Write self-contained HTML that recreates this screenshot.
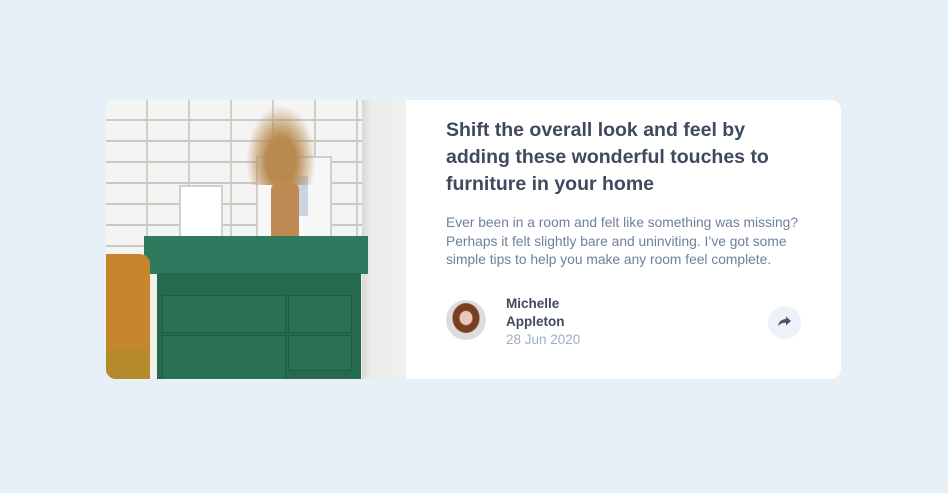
<!DOCTYPE html>
<html><head><style>
body{margin:0;width:948px;height:493px;background:#e7eff7;font-family:"Liberation Sans",sans-serif;position:relative;overflow:hidden}
.card{position:absolute;left:106px;top:100px;width:735px;height:279px;background:#fff;border-radius:10px;overflow:hidden}
.img{position:absolute;left:0;top:0;width:300px;height:279px;overflow:hidden;background:#f1f0ee}
.a{position:absolute}
h1{position:absolute;left:340px;top:17px;width:350px;margin:0;font-size:19.5px;line-height:27px;color:#3f4a5e;font-weight:bold}
p{position:absolute;left:340px;top:114px;width:362px;margin:0;font-size:13.8px;line-height:18.5px;color:#6e8098}
.av{position:absolute;left:340px;top:200px;width:40px;height:40px;border-radius:50%;background:radial-gradient(ellipse at 50% 45%,#e9c9b5 0 6px,#7a3f22 7px 13px,#ddd 14px)}
.nm{position:absolute;left:400px;top:195px;font-size:13.5px;line-height:18px;font-weight:bold;color:#3f4a5e}
.dt{position:absolute;left:400px;top:232px;font-size:13.5px;color:#9eafc2}
.sh{position:absolute;left:662px;top:206px;width:33px;height:33px;border-radius:50%;background:#ecf2f8}
.br{background:repeating-linear-gradient(180deg,transparent 0 19px,#c9c9c6 19px 21px),repeating-linear-gradient(90deg,#f4f4f3 0 40px,#cfcfcc 40px 42px)}
</style></head><body>
<div class="card">
<div class="img">
<div class="a br" style="left:0;top:0;width:258px;height:160px"></div>
<div class="a" style="left:256px;top:0;width:44px;height:279px;background:linear-gradient(90deg,#d8d8d6,#ebebea 20%,#f0f0ef)"></div>
<div class="a" style="left:73px;top:85px;width:40px;height:58px;background:#fff;border:2px solid #cfd0d2"></div>
<div class="a" style="left:150px;top:56px;width:72px;height:82px;background:#f7f7f7;border:2px solid #cfd0d2"></div>
<div class="a" style="left:172px;top:76px;width:30px;height:40px;background:#c9d3e1"></div>
<div class="a" style="left:140px;top:5px;width:70px;height:80px;background:radial-gradient(ellipse at 50% 70%,#b88a4e 0 30%,rgba(184,138,78,.4) 55%,transparent 70%)"></div>
<div class="a" style="left:165px;top:82px;width:28px;height:75px;background:#c08a55;border-radius:8px 8px 6px 6px"></div>
<div class="a" style="left:38px;top:136px;width:224px;height:38px;background:#2d7a5e"></div>
<div class="a" style="left:51px;top:173px;width:204px;height:106px;background:#25694f"></div>
<div class="a" style="left:56px;top:195px;width:122px;height:36px;background:#2a7055;border:1px solid #1f5b44"></div>
<div class="a" style="left:182px;top:195px;width:62px;height:36px;background:#2a7055;border:1px solid #1f5b44"></div>
<div class="a" style="left:56px;top:235px;width:122px;height:44px;background:#2a7055;border:1px solid #1f5b44"></div>
<div class="a" style="left:182px;top:235px;width:62px;height:34px;background:#2a7055;border:1px solid #1f5b44"></div>
<div class="a" style="left:0;top:154px;width:44px;height:125px;background:#c5862e;border-radius:0 10px 0 0"></div>
<div class="a" style="left:0;top:250px;width:44px;height:29px;background:#b58a2a"></div>
</div>
<h1>Shift the overall look and feel by adding these wonderful touches to furniture in your home</h1>
<p>Ever been in a room and felt like something was missing? Perhaps it felt slightly bare and uninviting. I’ve got some simple tips to help you make any room feel complete.</p>
<div class="av"></div>
<div class="nm">Michelle<br>Appleton</div>
<div class="dt">28 Jun 2020</div>
<div class="sh"><svg width="33" height="33" viewBox="0 0 33 33"><path d="M18 10.5l5 4.5-5 4.5v-2.8c-3.5 0-6 .8-8 3.5.6-4.2 3-6.8 8-7.2z" fill="#48556a"/></svg></div>
</div>
</body></html>
